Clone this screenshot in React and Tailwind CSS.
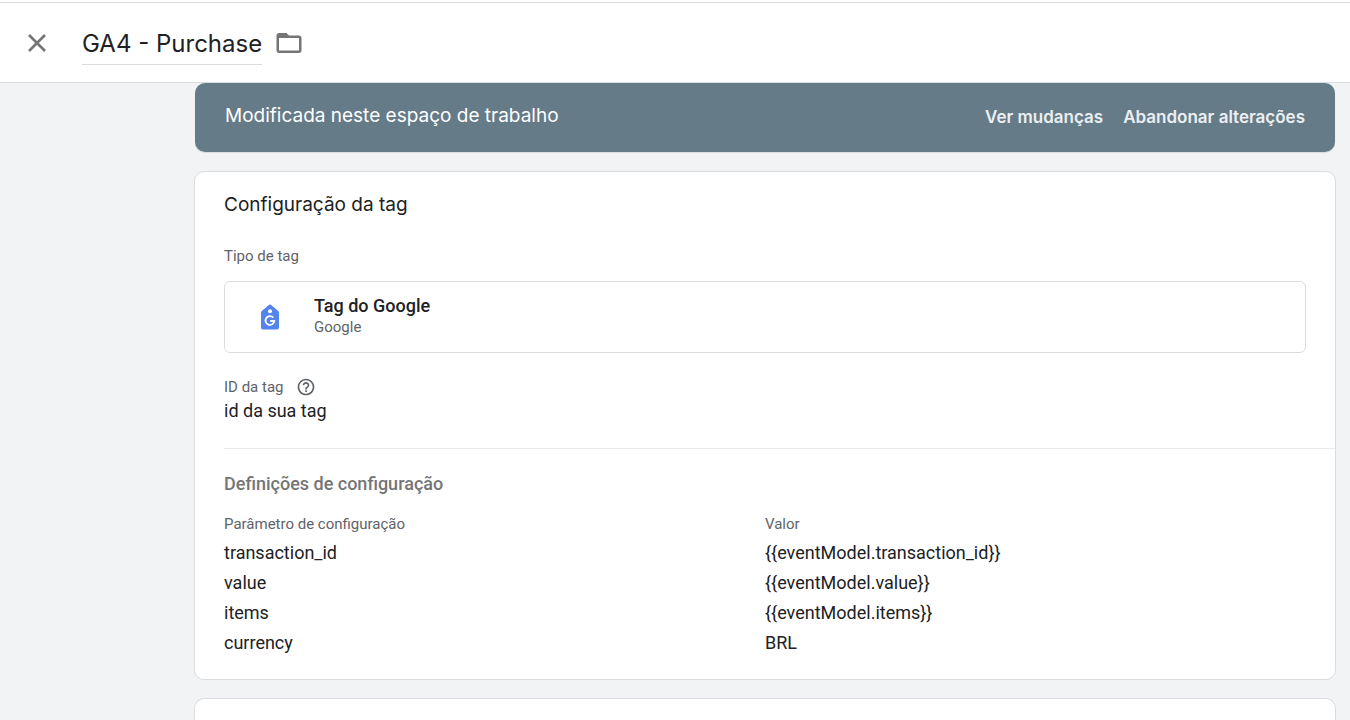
import React, { useState } from 'react';

const settings = [
  { param: 'transaction_id', value: '{{eventModel.transaction_id}}' },
  { param: 'value', value: '{{eventModel.value}}' },
  { param: 'items', value: '{{eventModel.items}}' },
  { param: 'currency', value: 'BRL' },
];

const CloseIcon = () => (
  <svg viewBox="0 0 30 30" className="size-[30px]" fill="none" stroke="#757575" strokeWidth="2.6">
    <path d="M7 7 L23 23 M23 7 L7 23" />
  </svg>
);

const FolderIcon = () => (
  <svg viewBox="0 0 24 24" className="size-[30px]" fill="#757575">
    <path d="M20 6h-8l-2-2H4c-1.1 0-1.99.9-1.99 2L2 18c0 1.1.9 2 2 2h16c1.1 0 2-.9 2-2V8c0-1.1-.9-2-2-2zm0 12H4V8h16v10z" />
  </svg>
);

const HelpIcon = () => (
  <svg viewBox="0 0 24 24" className="size-5" fill="#5f6368">
    <path d="M11 18h2v-2h-2v2zm1-16C6.48 2 2 6.48 2 12s4.48 10 10 10 10-4.48 10-10S17.52 2 12 2zm0 18c-4.41 0-8-3.59-8-8s3.59-8 8-8 8 3.59 8 8-3.59 8-8 8zm0-14c-2.21 0-4 1.79-4 4h2c0-1.1.9-2 2-2s2 .9 2 2c0 2-3 1.75-3 5h2c0-2.25 3-2.5 3-5 0-2.21-1.79-4-4-4z" />
  </svg>
);

const TagIcon = () => (
  <svg viewBox="0 0 20 26" className="w-5 h-[26px]">
    <path
      d="M8.9 .9 Q10 0 11.1 .9 L18 6.8 Q19 7.7 19 8.8 V23.4 Q19 25.4 17 25.4 H3 Q1 25.4 1 23.4 V8.8 Q1 7.7 2 6.8 Z"
      fill="#5383ec"
    />
    <circle cx="10" cy="7.2" r="2" fill="#fff" />
    <path d="M13.3 13.7 A4.4 4.4 0 1 0 14.3 17 H10.2" fill="none" stroke="#fff" strokeWidth="1.8" />
  </svg>
);

const App = () => {
  const [name, setName] = useState('GA4 - Purchase');

  return (
    <div className="flex min-h-screen flex-col bg-[#f1f3f4] font-['Roboto',sans-serif] text-lg text-[#202124]">
      <div className="h-[2px] bg-white" />
      <header className="flex h-[81px] items-center border-y border-[#dadce0] bg-white pl-[22px]">
        <button type="button" aria-label="Fechar" className="shrink-0">
          <CloseIcon />
        </button>
        <input
          type="text"
          aria-label="Nome da tag"
          value={name}
          onChange={(e) => setName(e.target.value)}
          className="ml-[30px] mt-px h-[43px] w-[180px] border-b border-[#dadce0] bg-transparent pt-0.5 font-['Inter',sans-serif] text-[24px] outline-none"
        />
        <button type="button" aria-label="Mover para pasta" className="ml-3 shrink-0">
          <FolderIcon />
        </button>
      </header>

      <main className="flex flex-1 flex-col pl-[194px] pr-[14px]">
        <section className="mx-px flex h-[69px] items-center justify-between rounded-[10px] bg-[#657b88] px-[30px] font-['Inter',sans-serif] shadow-[0_1px_1px_#dadce0]">
          <h2 className="pb-1 text-[19px] text-white">Modificada neste espaço de trabalho</h2>
          <div className="flex gap-5 text-[17px] font-semibold text-[#eceff1]">
            <button type="button">Ver mudanças</button>
            <button type="button">Abandonar alterações</button>
          </div>
        </section>

        <section className="mt-[19px] rounded-[10px] border border-[#dadce0] bg-white pb-[21px] pl-[29px]">
          <h2 className="pt-[17px] font-['Inter',sans-serif] text-[19px] leading-8">Configuração da tag</h2>

          <div className="pr-[29px]">
            <p className="mt-[25px] text-[15px] leading-5 text-[#5f6368]">Tipo de tag</p>
            <div className="mt-[15px] flex h-[72px] items-center rounded-md border border-[#dadce0] pl-[35px]">
              <TagIcon />
              <div className="ml-[34px] pb-0.5">
                <p className="font-medium leading-[22px]">Tag do Google</p>
                <p className="text-[15px] leading-5 text-[#5f6368]">Google</p>
              </div>
            </div>

            <div className="mt-6 flex h-5 items-center gap-[13px] text-[15px] leading-5 text-[#5f6368]">
              <span>ID da tag</span>
              <button type="button" aria-label="Ajuda sobre o ID da tag">
                <HelpIcon />
              </button>
            </div>
            <p className="mt-0.5 leading-6">id da sua tag</p>
          </div>

          <hr className="mt-[25px] border-[#e8eaed]" />

          <div className="pr-[29px]">
            <h3 className="mt-[23px] font-medium leading-6 text-[#757575]">Definições de configuração</h3>
            <table className="mt-[14px] w-full table-fixed text-left">
              <thead>
                <tr className="h-[28px] text-[15px] leading-5 text-[#5f6368]">
                  <th className="font-normal">Parâmetro de configuração</th>
                  <th className="font-normal">Valor</th>
                </tr>
              </thead>
              <tbody>
                {settings.map((row) => (
                  <tr key={row.param} className="h-[30px]">
                    <td>{row.param}</td>
                    <td>{row.value}</td>
                  </tr>
                ))}
              </tbody>
            </table>
          </div>
        </section>

        <section className="mt-[18px] flex-1 rounded-t-[10px] border border-b-0 border-[#dadce0] bg-white" />
      </main>
    </div>
  );
};

export default App;
